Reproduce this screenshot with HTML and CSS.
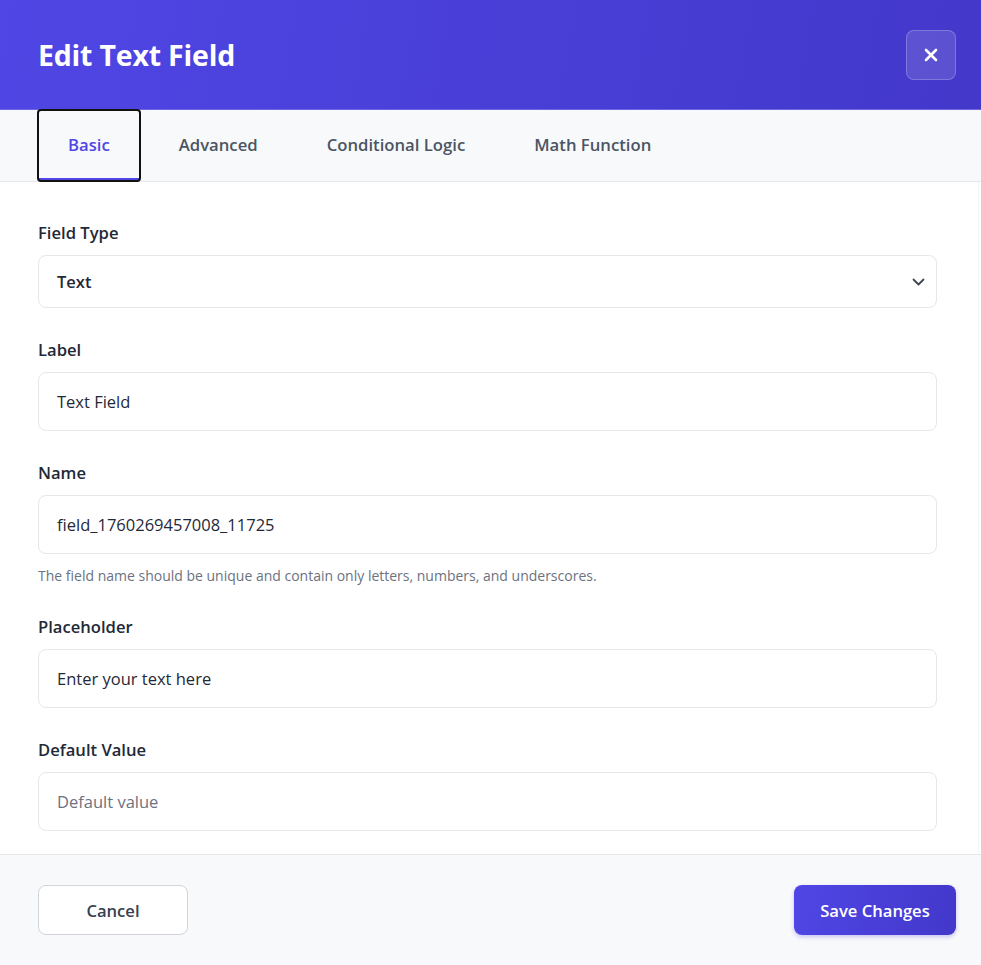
FILE: index.html
```html
<!DOCTYPE html>
<html lang="en">
<head>
<meta charset="utf-8">
<title>Edit Text Field</title>
<link rel="stylesheet" href="styles.css">
</head>
<body>
<div class="modal">
  <header class="modal-header">
    <h1 class="modal-title">Edit Text Field</h1>
    <button class="close-btn" aria-label="Close">
      <svg width="14" height="14" viewBox="0 0 14 14" fill="none" stroke="#fff" stroke-width="2.6" stroke-linecap="round"><path d="M2 2L12 12M12 2L2 12"/></svg>
    </button>
  </header>
  <nav class="tabs">
    <button class="tab active">Basic</button>
    <button class="tab">Advanced</button>
    <button class="tab">Conditional Logic</button>
    <button class="tab">Math Function</button>
  </nav>
  <main class="modal-body">
    <div class="field">
      <label class="field-label">Field Type</label>
      <div class="select">
        <span class="select-value">Text</span>
        <svg class="chevron" width="13" height="8" viewBox="0 0 13 8" fill="none" stroke="#3f4652" stroke-width="1.8" stroke-linecap="round" stroke-linejoin="round"><path d="M1.5 1.5L6.5 6.5L11.5 1.5"/></svg>
      </div>
    </div>
    <div class="field">
      <label class="field-label">Label</label>
      <div class="input">Text Field</div>
    </div>
    <div class="field with-help">
      <label class="field-label">Name</label>
      <div class="input">field_1760269457008_11725</div>
      <p class="help">The field name should be unique and contain only letters, numbers, and underscores.</p>
    </div>
    <div class="field">
      <label class="field-label">Placeholder</label>
      <div class="input">Enter your text here</div>
    </div>
    <div class="field last">
      <label class="field-label">Default Value</label>
      <div class="input placeholder">Default value</div>
    </div>
  </main>
  <footer class="modal-footer">
    <button class="btn btn-cancel">Cancel</button>
    <button class="btn btn-save">Save Changes</button>
  </footer>
</div>
</body>
</html>
```

FILE: styles.css
```css
* { box-sizing: border-box; }
html, body { margin: 0; padding: 0; }
body {
  font-family: "Open Sans", "Noto Sans", "Liberation Sans", sans-serif;
  background: #ffffff;
  color: #1f2937;
  width: 981px;
  height: 965px;
  overflow: hidden;
}
.modal {
  display: flex;
  flex-direction: column;
  height: 965px;
}
.modal-header {
  height: 110px;
  flex: none;
  display: flex;
  align-items: center;
  justify-content: space-between;
  padding: 1px 25px 0 38px;
  background: linear-gradient(100deg, #4f46e5 0%, #4338ca 100%);
  border-bottom: 1px solid #6c66e2;
}
.modal-title {
  margin: 0;
  color: #ffffff;
  font-size: 28.5px;
  font-weight: 700;
  letter-spacing: -0.2px;
}
.close-btn {
  width: 50px;
  height: 50px;
  border-radius: 8px;
  background: rgba(255, 255, 255, 0.13);
  border: 1px solid rgba(255, 255, 255, 0.22);
  display: flex;
  align-items: center;
  justify-content: center;
  padding: 0;
}
.tabs {
  flex: none;
  height: 72px;
  display: flex;
  gap: 9px;
  padding: 0 38px;
  background: #f8f9fb;
  border-bottom: 1px solid #e5e7eb;
}
.tab {
  font-family: inherit;
  font-size: 16.7px;
  font-weight: 600;
  color: #4b5563;
  background: transparent;
  border: 0;
  border-bottom: 3px solid transparent;
  padding: 1px 30px 0;
  height: 71px;
  margin: 0;
}
.tab.active {
  color: #4f46e5;
  border-bottom-color: #4f46e5;
  outline: 2px solid #111111;
  outline-offset: -1px;
  border-radius: 3px;
}
.modal-body {
  flex: 1;
  padding: 39px 41px 0 38px;
  border-right: 1px solid #f3f3f5;
  margin-right: 2px;
  overflow: hidden;
}
.field { margin-bottom: 30px; }
.field.with-help { margin-bottom: 29px; }
.field.last { margin-bottom: 0; }
.field-label {
  display: block;
  font-size: 16.6px;
  font-weight: 600;
  line-height: 24px;
  color: #1f2937;
  margin-bottom: 10px;
}
.select, .input {
  display: flex;
  align-items: center;
  border: 1px solid #e5e7eb;
  border-radius: 8px;
  background: #fff;
  padding: 0 18px;
  font-size: 16.5px;
  color: #1f2937;
}
.select {
  height: 53px;
  justify-content: space-between;
  padding-right: 11px;
}
.select-value { font-weight: 600; }
.input { height: 59px; }
.input.placeholder { color: #6b7280; }
.help {
  margin: 12px 0 0;
  font-size: 14px;
  line-height: 20px;
  color: #6b7280;
}
.modal-footer {
  flex: none;
  height: 111px;
  display: flex;
  justify-content: space-between;
  align-items: flex-start;
  padding: 30px 25px 0 38px;
  background: #f8f9fb;
  border-top: 1px solid #e5e7eb;
}
.btn {
  font-family: inherit;
  font-size: 16.6px;
  font-weight: 600;
  height: 50px;
  border-radius: 8px;
  cursor: pointer;
}
.btn-cancel {
  width: 150px;
  background: #ffffff;
  color: #374151;
  border: 1px solid #d1d5db;
}
.btn-save {
  width: 162px;
  color: #ffffff;
  border: 0;
  background: linear-gradient(100deg, #4f46e5 0%, #4338ca 100%);
  box-shadow: 0 2px 4px rgba(79, 70, 229, 0.3);
}
```
